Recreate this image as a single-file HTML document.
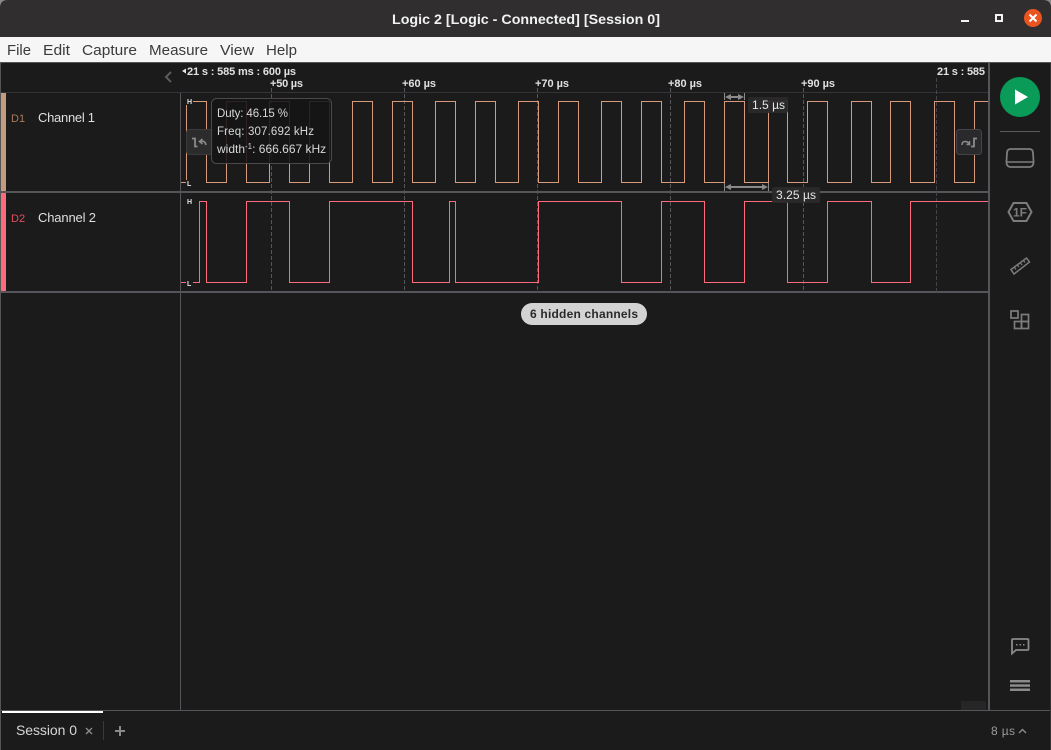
<!DOCTYPE html>
<html><head><meta charset="utf-8"><title>Logic 2</title>
<style>
html,body{margin:0;padding:0;width:1051px;height:750px;overflow:hidden;background:#3a3838}
svg{display:block;position:absolute;left:0;top:0}
text{font-family:"Liberation Sans",sans-serif}
</style></head><body>
<svg width="1051" height="750" viewBox="0 0 1051 750" xmlns="http://www.w3.org/2000/svg">
<!-- chrome -->
<rect width="1051" height="750" fill="#1b1b1b"/>
<path d="M0 37V8Q0 0 8 0H1043Q1051 0 1051 8V37Z" fill="#302e2e"/>
<path d="M0 8Q0 0 8 0H1043Q1051 0 1051 8V0H0Z" fill="#8a8a8a"/>
<text x="392" y="24" font-size="14" font-weight="700" fill="#f2f2f2" textLength="268" lengthAdjust="spacingAndGlyphs">Logic 2 [Logic - Connected] [Session 0]</text>
<rect x="961" y="20" width="8" height="2" fill="#f2f2f2"/>
<rect x="996" y="15" width="6" height="6" fill="none" stroke="#f2f2f2" stroke-width="2"/>
<circle cx="1033" cy="18" r="9" fill="#e95420"/>
<path d="M1029.500 14.500L1036.500 21.500M1036.500 14.500L1029.500 21.500" stroke="#fff" stroke-width="2"/>
<rect y="37" width="1051" height="25" fill="#f6f6f6"/>
<rect y="62" width="1051" height="1" fill="#55555a"/>
<g font-size="15" fill="#3a3a3a">
<text x="7" y="55" textLength="24" lengthAdjust="spacingAndGlyphs">File</text>
<text x="43" y="55" textLength="27" lengthAdjust="spacingAndGlyphs">Edit</text>
<text x="82" y="55" textLength="55" lengthAdjust="spacingAndGlyphs">Capture</text>
<text x="149" y="55" textLength="59" lengthAdjust="spacingAndGlyphs">Measure</text>
<text x="220" y="55" textLength="34" lengthAdjust="spacingAndGlyphs">View</text>
<text x="266" y="55" textLength="31" lengthAdjust="spacingAndGlyphs">Help</text>
</g>

<!-- structure lines -->
<rect x="0" y="63" width="1" height="687" fill="#555"/>
<rect x="1050" y="63" width="1" height="687" fill="#333"/>
<rect x="1" y="92" width="987" height="1" fill="#33333a"/>
<rect x="1" y="191" width="987" height="2" fill="#55555a"/>
<rect x="1" y="291" width="987" height="2" fill="#55555a"/>
<rect x="180" y="93" width="1" height="617" fill="#55555a"/>
<rect x="988" y="63" width="2" height="647" fill="#55555a"/>
<rect x="1" y="93" width="5" height="98" fill="#c49a80"/>
<rect x="1" y="193" width="5" height="98" fill="#ff6b7d"/>
<rect x="961" y="701" width="25" height="9" fill="#262626"/>

<!-- time ticks -->
<g stroke-width="1" fill="none">
<path d="M271.500 88V292M404.500 88V292M537.500 88V292M670.500 88V292M803.500 88V292" stroke="#55555a" stroke-dasharray="4 2"/>
<path d="M936.500 78V292" stroke="#44444a" stroke-dasharray="4 2"/>
</g>

<!-- header -->
<path d="M171 72L166 77L171 82" fill="none" stroke="#5c5c5c" stroke-width="2"/>
<path d="M186 68.500V73.500L182 71Z" fill="#e6e6e6"/>
<g font-size="11" font-weight="700" fill="#e0e0e0">
<text x="187" y="75" textLength="109" lengthAdjust="spacing">21 s : 585 ms : 600 µs</text>
<text x="270" y="87" textLength="33">+50 µs</text>
<text x="402" y="87" textLength="34">+60 µs</text>
<text x="535" y="87" textLength="34">+70 µs</text>
<text x="668" y="87" textLength="34">+80 µs</text>
<text x="801" y="87" textLength="34">+90 µs</text>
<text x="937" y="75" textLength="48">21 s : 585</text>
</g>

<!-- labels -->
<text x="11" y="122" font-size="11" fill="#a9795c">D1</text>
<text x="38" y="122" font-size="13" fill="#dfdfdf" textLength="57">Channel 1</text>
<text x="11" y="222" font-size="11" fill="#e2505f">D2</text>
<text x="38" y="222" font-size="13" fill="#dfdfdf" textLength="58">Channel 2</text>

<!-- waveforms -->
<path fill="none" stroke="#d79a7b" stroke-width="1" d="M181 182.500H186.500V101.500H206.500V182.500H226.500V101.500H246.500V182.500H269.500V101.500H289.500V182.500H309.500V101.500H329.500V182.500H352.500V101.500H372.500V182.500H392.500V101.500H412.500V182.500H435.500V101.500H455.500V182.500H475.500V101.500H495.500V182.500H518.500V101.500H538.500V182.500H558.500V101.500H578.500V182.500H601.500V101.500H621.500V182.500H641.500V101.500H661.500V182.500H684.500V101.500H704.500V182.500H724.500V101.500H744.500V182.500H768.500V101.500H787.500V182.500H807.500V101.500H827.500V182.500H851.500V101.500H871.500V182.500H890.500V101.500H910.500V182.500H934.500V101.500H954.500V182.500H974.500V101.500H988"/>
<path fill="none" stroke="#ff6b7d" stroke-width="1" d="M181 282.500H199.500V201.500H206.500V282.500H246.500V201.500H289.500V282.500H329.500V201.500H412.500V282.500H449.500V201.500H455.500V282.500H538.500V201.500H621.500V282.500H661.500V201.500H704.500V282.500H744.500V201.500H787.500V282.500H827.500V201.500H871.500V282.500H910.500V201.500H988"/>

<!-- H/L -->
<g font-size="7" font-weight="700" fill="#e6e6e6">
<rect x="186" y="98" width="7" height="7" fill="#1b1b1b"/>
<text x="187" y="104">H</text>
<rect x="186" y="180" width="7" height="7" fill="#1b1b1b"/>
<text x="187" y="186">L</text>
<rect x="186" y="198" width="7" height="7" fill="#1b1b1b"/>
<text x="187" y="204">H</text>
<rect x="186" y="280" width="7" height="7" fill="#1b1b1b"/>
<text x="187" y="286">L</text>
</g>

<!-- nav buttons -->
<rect x="186.500" y="129.500" width="26" height="25" rx="3" fill="#2c2c2c" stroke="#3a3a3a"/>
<path d="M192 138.500H195V146.500H197.500" fill="none" stroke="#8a8a8a" stroke-width="1.800"/>
<path d="M206 145Q205 140 200 141.500M202.500 139L199.500 141.500L202.500 144" fill="none" stroke="#8a8a8a" stroke-width="1.600"/>
<rect x="956.500" y="129.500" width="25" height="25" rx="3" fill="#2a2a2c" stroke="#44444a"/>
<path d="M962 145Q962 141 966 141.500Q968 142 969 144M969.500 141V144.500H966.500" fill="none" stroke="#8a8a8a" stroke-width="1.500"/>
<path d="M971 146.500H974V138.500H977" fill="none" stroke="#8a8a8a" stroke-width="1.800"/>

<!-- tooltip -->
<rect x="211.500" y="98.500" width="120" height="65" rx="5" fill="#151515" fill-opacity=".88" stroke="#4a4a4a"/>
<g font-size="11.500" fill="#d8d8d8">
<text x="217" y="117" textLength="71" lengthAdjust="spacing">Duty: 46.15 %</text>
<text x="217" y="135" textLength="97" lengthAdjust="spacing">Freq: 307.692 kHz</text>
<text x="217" y="153" font-size="12">width<tspan font-size="8" dy="-4">-1</tspan><tspan dy="4">: 666.667 kHz</tspan></text>
</g>

<!-- measurements -->
<g stroke="#8a8a8a" fill="#8a8a8a">
<path d="M724.500 93V100M744.500 93V100" fill="none"/>
<path d="M728 97H741" stroke-width="2" fill="none"/>
<path d="M725 97L731 94V100ZM744 97L738 94V100Z" stroke="none"/>
<path d="M724.500 183V191M768.500 183V191" fill="none"/>
<path d="M728 187H765" stroke-width="2" fill="none"/>
<path d="M725 187L731 184V190ZM768 187L762 184V190Z" stroke="none"/>
</g>
<rect x="748" y="97" width="40" height="16" rx="2" fill="#2a2a2a" fill-opacity=".92"/>
<text x="752" y="109" font-size="12" fill="#e6e6e6" textLength="33">1.5 µs</text>
<rect x="772" y="187" width="48" height="16" rx="2" fill="#2a2a2a" fill-opacity=".95"/>
<text x="776" y="199" font-size="12" fill="#e6e6e6" textLength="40">3.25 µs</text>

<!-- pill -->
<rect x="521" y="303" width="126" height="22" rx="11" fill="#d3d3d3"/>
<text x="530" y="318" font-size="12" font-weight="700" fill="#2a2a2a" textLength="108">6 hidden channels</text>

<!-- right rail -->
<circle cx="1020" cy="97" r="20" fill="#0a9b58"/>
<path d="M1015 89.500L1028 97L1015 104.500Z" fill="#fff"/>
<rect x="1000" y="131" width="40" height="1" fill="#5a5a5a"/>
<g fill="none" stroke="#7c7c7c" stroke-width="1.800">
<path d="M1011 149H1029Q1033 149 1033 153L1033.500 161Q1034 167 1029 167H1011Q1006 167 1006.500 161L1007 153Q1007 149 1011 149Z"/>
<path d="M1007 162H1033" stroke-width="1.500"/>
<path d="M1013.500 203H1026.500L1031.500 212L1026.500 221H1013.500L1008.500 212Z" stroke-width="2"/>
<path d="M1011 269.500L1026.500 258L1029.500 262L1014 274Z" stroke-width="1.500"/>
<path d="M1014.500 267.500L1016 269.500M1017.500 265L1019 267M1020.500 263L1022 265M1023.500 260.500L1025 262.500" stroke-width="1.200"/>
<rect x="1011" y="311" width="7" height="7" stroke-width="1.700"/>
<rect x="1014.500" y="321.500" width="7" height="7" stroke-width="1.700"/>
<rect x="1021.500" y="314.500" width="7" height="7" stroke-width="1.700"/>
<rect x="1021.500" y="321.500" width="7" height="7" stroke-width="1.700"/>
<path d="M1013 639H1027.500Q1028.500 639 1028.500 640V649Q1028.500 650 1027.500 650H1016L1012 653.500V640Q1012 639 1013 639Z" stroke="#8a8a8a" stroke-width="1.800"/>
</g>
<text x="1020" y="216.500" text-anchor="middle" font-size="12" font-weight="700" fill="#7c7c7c">1F</text>
<g fill="#8a8a8a">
<rect x="1016" y="644" width="1.500" height="1.500"/><rect x="1019.500" y="644" width="1.500" height="1.500"/><rect x="1023" y="644" width="1.500" height="1.500"/>
<rect x="1010" y="680" width="20" height="2.500"/><rect x="1010" y="684.300" width="20" height="2.500"/><rect x="1010" y="688.500" width="20" height="2.500"/>
</g>

<!-- bottom bar -->
<rect x="1" y="710" width="1049" height="1" fill="#55555a"/>
<rect x="2" y="711" width="101" height="2" fill="#ffffff"/>
<text x="16" y="735" font-size="14" fill="#d6d6d6" textLength="61">Session 0</text>
<path d="M86 728L92 734M92 728L86 734" stroke="#8a8a8a" stroke-width="1.400"/>
<rect x="103" y="721" width="1" height="19" fill="#3a3a3a"/>
<path d="M120 726V736M115 731H125" stroke="#8a8a8a" stroke-width="2"/>
<text x="991" y="735" font-size="12" fill="#9a9a9a" textLength="24">8 µs</text>
<path d="M1019 733L1022.500 729.500L1026 733" fill="none" stroke="#8a8a8a" stroke-width="1.400"/>
</svg>
</body></html>
